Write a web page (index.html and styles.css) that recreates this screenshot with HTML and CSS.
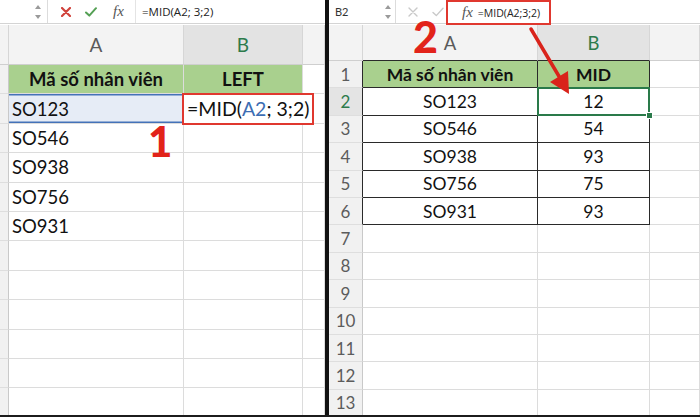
FILE: index.html
```html
<!DOCTYPE html>
<html lang="vi">
<head>
<meta charset="utf-8">
<title>MID</title>
<link rel="stylesheet" href="styles.css">
</head>
<body>
<div class="frame">
  <section class="panel left">
    <div class="fbar">
      <div class="nb nb-l">
        <svg class="spin" width="6" height="16" viewBox="0 0 6 16"><path d="M0 5 L3 1 L6 5 Z M0 11 L3 15 L6 11 Z" fill="#9a9a9a"/></svg>
      </div>
      <div class="btns btns-l">
        <svg class="ico-x" width="10" height="10" viewBox="0 0 10 10"><path d="M1 1 L9 9 M9 1 L1 9" stroke="#d0423b" stroke-width="2.2" stroke-linecap="round"/></svg>
        <svg class="ico-ok" width="12" height="10" viewBox="0 0 12 10"><path d="M1 5.5 L4.3 8.6 L11 1.2" stroke="#55a055" stroke-width="2" fill="none" stroke-linecap="round" stroke-linejoin="round"/></svg>
        <span class="fx">fx</span>
      </div>
      <div class="ft ft-l">=MID(A2; 3;2)</div>
    </div>
    <div class="sheet sheet-l">
      <div class="c ch rhc"></div><div class="c ch">A</div><div class="c ch sel">B</div><div class="c ch"></div>

      <div class="c rh"></div><div class="c g b ctr">Mã số nhân viên</div><div class="c g b ctr">LEFT</div><div class="c"></div>
      <div class="c rh"></div><div class="c ref">SO123</div><div class="c over"><span class="edit">=MID(<span class="blue">A2</span>; 3;2)</span></div><div class="c"></div>
      <div class="c rh"></div><div class="c">SO546</div><div class="c"></div><div class="c"></div>
      <div class="c rh"></div><div class="c">SO938</div><div class="c"></div><div class="c"></div>
      <div class="c rh"></div><div class="c">SO756</div><div class="c"></div><div class="c"></div>
      <div class="c rh"></div><div class="c">SO931</div><div class="c"></div><div class="c"></div>
      <div class="c rh"></div><div class="c"></div><div class="c"></div><div class="c"></div>
      <div class="c rh"></div><div class="c"></div><div class="c"></div><div class="c"></div>
      <div class="c rh"></div><div class="c"></div><div class="c"></div><div class="c"></div>
      <div class="c rh"></div><div class="c"></div><div class="c"></div><div class="c"></div>
      <div class="c rh"></div><div class="c"></div><div class="c"></div><div class="c"></div>
      <div class="c rh"></div><div class="c"></div><div class="c"></div><div class="c"></div>
    </div>
    <div class="mark mark1">1</div>
  </section>

  <div class="divider"></div>

  <section class="panel right">
    <div class="fbar">
      <div class="nb nb-r">
        <span class="nbtext">B2</span>
        <svg class="spin" width="6" height="16" viewBox="0 0 6 16"><path d="M0 5 L3 1 L6 5 Z M0 11 L3 15 L6 11 Z" fill="#9a9a9a"/></svg>
      </div>
      <div class="btns btns-r">
        <svg class="ico-x" width="10" height="10" viewBox="0 0 10 10"><path d="M1 1 L9 9 M9 1 L1 9" stroke="#c9c9c9" stroke-width="1.4" stroke-linecap="round"/></svg>
        <svg class="ico-ok" width="12" height="10" viewBox="0 0 12 10"><path d="M1 5.5 L4.3 8.6 L11 1.2" stroke="#c9c9c9" stroke-width="1.4" fill="none" stroke-linecap="round" stroke-linejoin="round"/></svg>
      </div>
      <div class="fxbox">
        <span class="fx">fx</span>
        <span class="ft ft-r">=MID(A2;3;2)</span>
      </div>
    </div>
    <div class="sheet sheet-r">
      <div class="c ch rhc"></div><div class="c ch tb">A</div><div class="c ch sel tb">B</div><div class="c ch"></div>

      <div class="c rh tr">1</div><div class="c g b ctr t">Mã số nhân viên</div><div class="c g b ctr t">MID</div><div class="c"></div>
      <div class="c rh tr rsel">2</div><div class="c ctr t">SO123</div><div class="c ctr t selcell">12</div><div class="c"></div>
      <div class="c rh tr">3</div><div class="c ctr t">SO546</div><div class="c ctr t">54</div><div class="c"></div>
      <div class="c rh tr">4</div><div class="c ctr t">SO938</div><div class="c ctr t">93</div><div class="c"></div>
      <div class="c rh tr">5</div><div class="c ctr t">SO756</div><div class="c ctr t">75</div><div class="c"></div>
      <div class="c rh tr">6</div><div class="c ctr t">SO931</div><div class="c ctr t">93</div><div class="c"></div>
      <div class="c rh">7</div><div class="c"></div><div class="c"></div><div class="c"></div>
      <div class="c rh">8</div><div class="c"></div><div class="c"></div><div class="c"></div>
      <div class="c rh">9</div><div class="c"></div><div class="c"></div><div class="c"></div>
      <div class="c rh">10</div><div class="c"></div><div class="c"></div><div class="c"></div>
      <div class="c rh">11</div><div class="c"></div><div class="c"></div><div class="c"></div>
      <div class="c rh">12</div><div class="c"></div><div class="c"></div><div class="c"></div>
      <div class="c rh">13</div><div class="c"></div><div class="c"></div><div class="c"></div>
    </div>
    <div class="mark mark2">2</div>
    <svg class="arrow" width="371" height="120" viewBox="0 0 371 120">
      <line x1="202" y1="29" x2="231" y2="78" stroke="#d9231b" stroke-width="3.5" stroke-linecap="round"/>
      <polygon points="240,94 221,82 239,71" fill="#d9231b"/>
    </svg>
  </section>
</div>
</body>
</html>
```

FILE: styles.css
```css
html, body {
  margin: 0;
  padding: 0;
  background: #ffffff;
  overflow: hidden;
}

.frame {
  width: 700px;
  height: 417px;
  box-sizing: border-box;
  border-bottom: 2px solid #1c1c1c;
  display: flex;
  overflow: hidden;
  font-family: Lato, "Open Sans", "Liberation Sans", sans-serif;
  color: #111;
}

.panel {
  position: relative;
  height: 415px;
  overflow: hidden;
  background: #fff;
}

.left { width: 325px; }
.right { width: 371px; }

.divider {
  width: 4px;
  height: 415px;
  background: #111;
}

/* formula bar */
.fbar {
  height: 24px;
  box-sizing: border-box;
  border-bottom: 1px solid #d4d4d4;
  display: flex;
  align-items: center;
  background: #fff;
}

.nb {
  height: 100%;
  display: flex;
  align-items: center;
  box-sizing: border-box;
  border-right: 1px solid #dcdcdc;
}

.nb-l { width: 48px; padding-right: 6px; justify-content: flex-end; }
.nb-r { width: 67px; padding: 0 4px 0 6px; justify-content: space-between; }

.nbtext {
  font-size: 11px;
  color: #333;
}

.btns {
  height: 100%;
  display: flex;
  align-items: center;
  box-sizing: border-box;
}

.btns-l {
  width: 88px;
  border-right: 1px solid #e4e4e4;
}
.btns-l .ico-x { margin-left: 13px; }
.btns-l .ico-ok { margin-left: 14px; }
.btns-l .fx { margin-left: 16px; }

.btns-r { width: 50px; }
.btns-r .ico-x { margin-left: 12px; }
.btns-r .ico-ok { margin-left: 14px; }

.fx {
  font-family: "Liberation Serif", "DejaVu Serif", serif;
  font-style: italic;
  font-size: 15px;
  color: #555;
  line-height: 1;
}

.ft {
  font-family: "Open Sans", "Liberation Sans", sans-serif;
  color: #222;
  white-space: nowrap;
}

.ft-l {
  font-size: 11.5px;
  padding-left: 6px;
}

.fxbox {
  align-self: flex-start;
  width: 105px;
  height: 25px;
  box-sizing: border-box;
  border: 2px solid #e0382f;
  display: flex;
  align-items: center;
  padding-left: 14px;
  gap: 5px;
  position: relative;
  z-index: 3;
  background: #fff;
}

.ft-r { font-size: 10.5px; }

/* sheets */
.sheet {
  display: grid;
}

.sheet-l {
  margin-top: 1px;
  grid-template-columns: 9px 175px 119px 22px;
  grid-template-rows: 40px;
  grid-auto-rows: 29.4px;
}

.sheet-r {
  margin-top: 1px;
  grid-template-columns: 34px 175px 112px 50px;
  grid-template-rows: 36px;
  grid-auto-rows: 27.4px;
}

.c {
  box-sizing: border-box;
  border-right: 1px solid #dcdcdc;
  border-bottom: 1px solid #dcdcdc;
  display: flex;
  align-items: center;
  white-space: nowrap;
  min-width: 0;
  font-size: 18.5px;
  padding-left: 3px;
}

.sheet-r .c { font-size: 17.5px; padding-left: 0; }

.ch {
  background: #f3f3f3;
  border-bottom-color: #cfcfcf;
  border-right-color: #d6d6d6;
  justify-content: center;
  color: #5a5a5a;
  font-size: 19px;
  padding-left: 0;
}
.sheet-r .ch { font-size: 18.5px; }

.ch.sel {
  background: #e3e3e3;
  color: #2d7b4c;
}

.rhc { background: #f3f3f3; }

.rh {
  background: #f1f1f1;
  border-right-color: #c9c9c9;
  border-bottom-color: #dedede;
  padding-left: 0;
}

.sheet-r .rh {
  justify-content: center;
  color: #5c5c5c;
  font-size: 17px;
}

.rsel {
  color: #2d7b4c !important;
  background: #e4e4e4;
}

.g { background: #a9d08e; }
.b { font-weight: 700; }
.ctr { justify-content: center; padding-left: 0; }

/* left specifics */
.ref {
  background: #e6ecf6;
  box-shadow: inset 0 1.5px 0 #4472b8, inset 0 -1.5px 0 #4472b8;
}

.over {
  overflow: visible;
  position: relative;
  z-index: 2;
  padding-left: 0;
}

.edit {
  margin-left: -2px;
  border: 2px solid #e0382f;
  padding: 0 3px;
  line-height: 28px;
  font-size: 19.5px;
  background: #fff;
  color: #111;
}

.blue { color: #3c6db3; }

/* right table borders */
.sheet-r .tb { border-bottom-color: #2a2a2a; }
.sheet-r .tr { border-right-color: #2a2a2a; }
.sheet-r .t {
  border-right-color: #2a2a2a;
  border-bottom-color: #2a2a2a;
}

.selcell { position: relative; }
.selcell::after {
  content: "";
  position: absolute;
  left: -1px;
  top: -1px;
  right: -1px;
  bottom: -1px;
  border: 2px solid #2a7a4a;
}
.selcell::before {
  content: "";
  position: absolute;
  right: -4px;
  bottom: -4px;
  width: 5px;
  height: 5px;
  background: #2a7a4a;
  border: 1px solid #fff;
  z-index: 2;
}

/* annotations */
.mark {
  position: absolute;
  font-family: Lato, "Liberation Sans", sans-serif;
  font-weight: 900;
  color: #e2231a;
  line-height: 1;
  z-index: 4;
}

.mark1 {
  font-size: 42px;
  left: 148px;
  top: 120px;
}

.mark2 {
  font-size: 43px;
  left: 84px;
  top: 15px;
}

.arrow {
  position: absolute;
  left: 0;
  top: 0;
  z-index: 5;
  pointer-events: none;
}
```
